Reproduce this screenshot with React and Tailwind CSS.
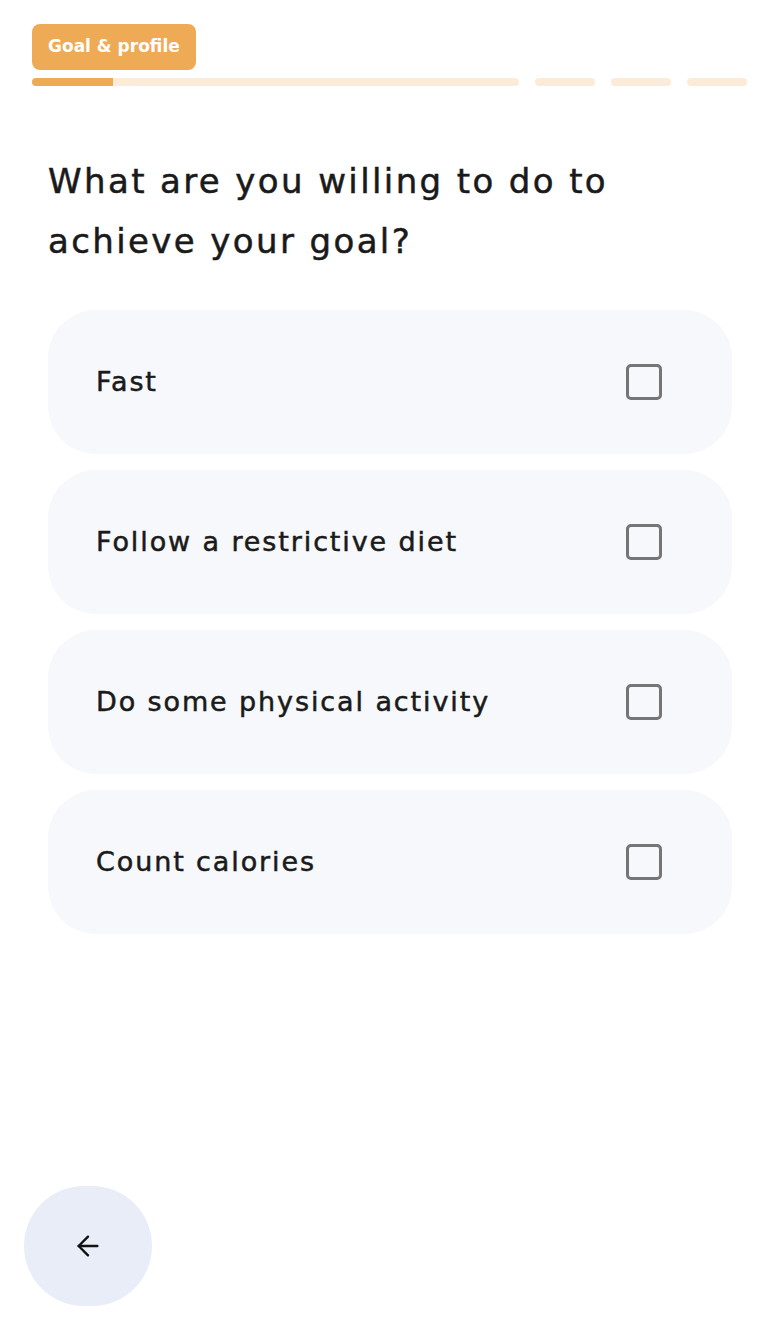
import React from 'react';

const options = ["Fast", "Follow a restrictive diet", "Do some physical activity", "Count calories"];

const OptionCard = ({ label }) => (
  <div className="h-[144px] rounded-[48px] bg-[#f6f8fb] pl-12 pr-[70px] flex items-center justify-between">
    <span className="text-[27px] tracking-[0.07em] text-[#1a1a1a] [-webkit-text-stroke:0.5px_#1a1a1a]">{label}</span>
    <div className="w-9 h-9 rounded-[5px] border-[3px] border-[#757575]" />
  </div>
);

export default function App() {
  return (
    <div className="w-[780px] h-[1326px] bg-white flex flex-col" style={{ fontFamily: "'DejaVu Sans', 'Noto Sans', sans-serif" }}>
      <div className="pt-6 px-8">
        <div className="inline-flex items-center h-[46px] px-4 rounded-lg bg-[#efaa55] text-white font-bold text-[17px]">
          Goal &amp; profile
        </div>
        <div className="mt-2 flex gap-4 h-2">
          <div className="w-[487px] rounded-full bg-[#fdebd9] overflow-hidden">
            <div className="w-[81px] h-full bg-[#efaa55]" />
          </div>
          <div className="w-[60px] rounded-full bg-[#fdebd9]" />
          <div className="w-[60px] rounded-full bg-[#fdebd9]" />
          <div className="w-[60px] rounded-full bg-[#fdebd9]" />
        </div>
      </div>
      <h1 className="mt-[65px] px-12 text-[34px] leading-[60px] tracking-[0.07em] text-[#1a1a1a] [-webkit-text-stroke:0.5px_#1a1a1a]">
        What are you willing to do to<br />achieve your goal?
      </h1>
      <div className="mt-[39px] ml-12 w-[684px] flex flex-col gap-4">
        {options.map((o) => <OptionCard key={o} label={o} />)}
      </div>
      <div className="mt-auto mb-5 ml-6 w-32 h-[120px] rounded-full bg-[#e8edf7] flex items-center justify-center">
        <svg width="32" height="32" viewBox="0 0 24 24" fill="none" stroke="#111" strokeWidth="1.8" strokeLinecap="round" strokeLinejoin="round">
          <path d="M19 12H5" />
          <path d="M12 19l-7-7 7-7" />
        </svg>
      </div>
    </div>
  );
}
